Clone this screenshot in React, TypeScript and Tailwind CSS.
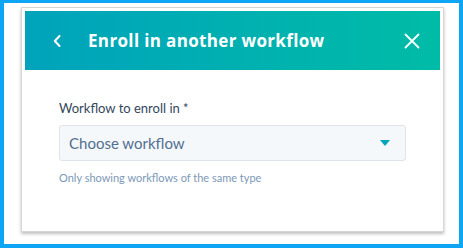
export default function App() {
  return (
    <div
      className="w-[463px] h-[248px] bg-white border-[#0ea5f5] border-l-[4px] border-r-[4px] border-t-[3px] border-b-[4px] overflow-hidden"
      style={{ fontFamily: "Lato, 'Noto Sans', sans-serif" }}
    >
      <div className="ml-[17px] mt-[4px] w-[423px] h-[225px] border border-[#d6d6d6] bg-white p-[3px] shadow-[0_2px_3px_rgba(0,0,0,0.25)]">
        {/* Header */}
        <div className="h-[59px] flex items-center bg-gradient-to-r from-[#00a3bb] to-[#00bca6] text-white">
          <button className="ml-[25px] w-[14px] flex justify-center">
            <svg width="8" height="12" viewBox="0 0 8 12" fill="none">
              <path d="M6.5 1 L1.8 6 L6.5 11" stroke="white" strokeWidth="2" strokeLinecap="round" strokeLinejoin="round" />
            </svg>
          </button>
          <h1 className="ml-[24px] text-[17px] font-bold tracking-[0.35px]" style={{ fontFamily: "'Open Sans', sans-serif" }}>
            Enroll in another workflow
          </h1>
          <button className="ml-auto mr-[20px]">
            <svg width="16" height="16" viewBox="0 0 16 16" fill="none">
              <path d="M1.5 1.5 L14.5 14.5 M14.5 1.5 L1.5 14.5" stroke="white" strokeWidth="1.8" strokeLinecap="round" />
            </svg>
          </button>
        </div>

        {/* Body */}
        <div className="pl-[34px] pt-[30px] pr-[34px]">
          <label className="block text-[13px] leading-[16px] text-[#33475b]">Workflow to enroll in *</label>
          <div className="mt-[9px] w-[347px] h-[36px] flex items-center bg-[#f5f8fa] border border-[#dfe3eb] rounded-[3px] px-[9px]">
            <span className="text-[15px] text-[#516f90]">Choose workflow</span>
            <svg className="ml-auto mr-[6px]" width="10" height="6" viewBox="0 0 10 6">
              <path d="M0 0 H10 L5 6 Z" fill="#00a4bd" />
            </svg>
          </div>
          <p className="mt-[10px] text-[11px] leading-[14px] text-[#7c98b6]">Only showing workflows of the same type</p>
        </div>
      </div>
    </div>
  );
}
